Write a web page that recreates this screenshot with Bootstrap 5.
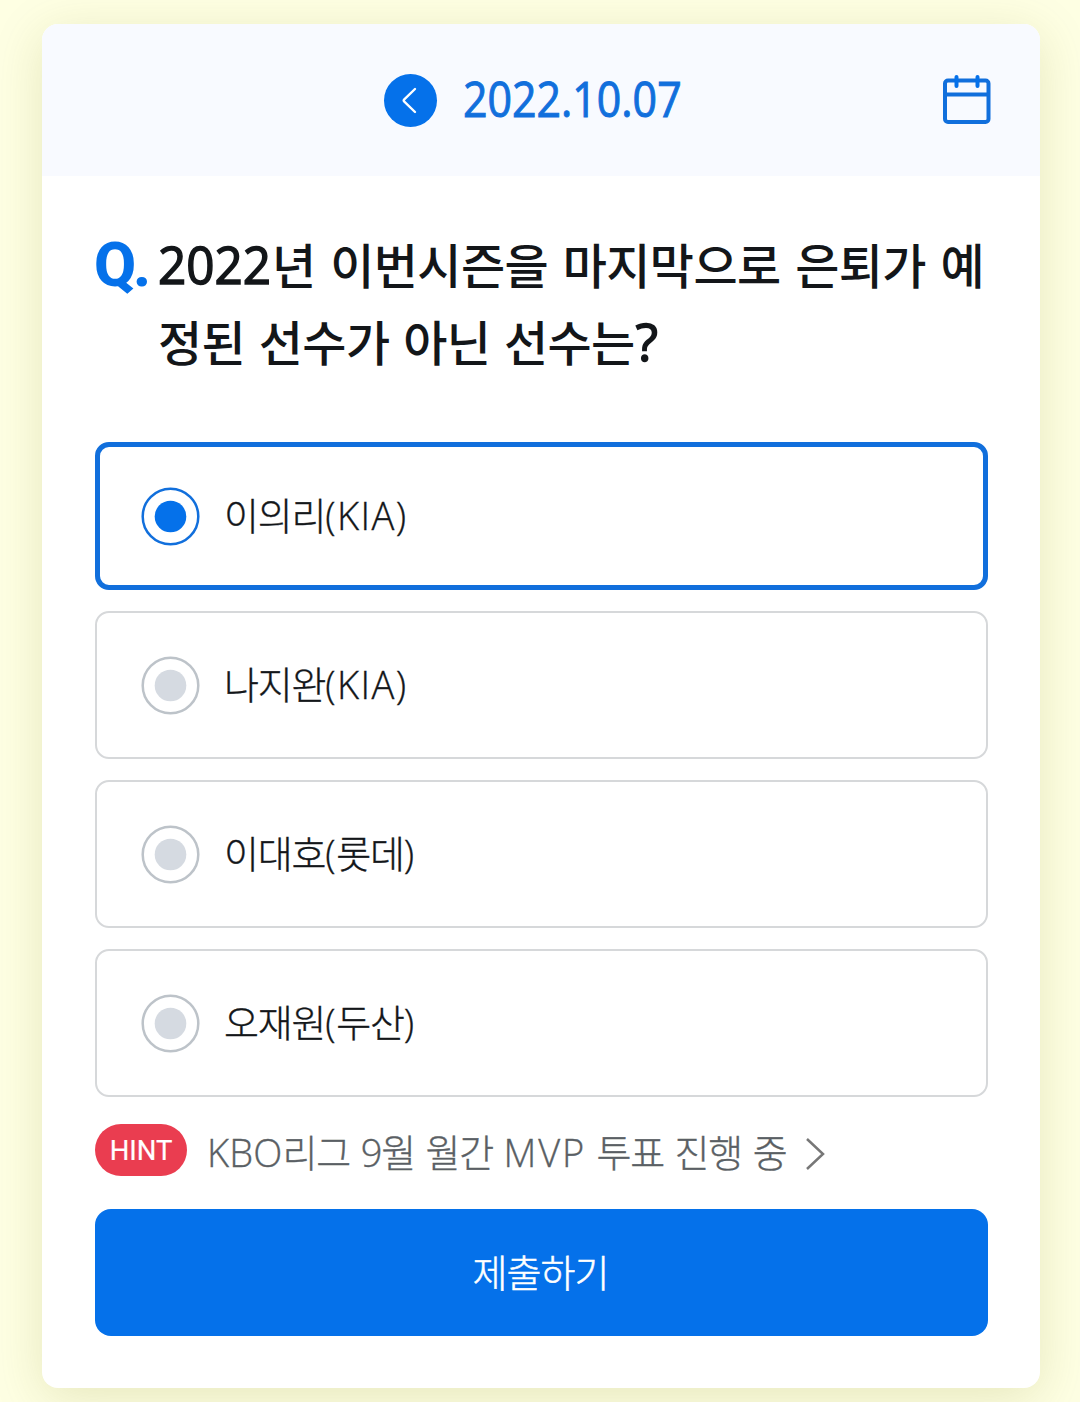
<!DOCTYPE html>
<html lang="ko">
<head>
<meta charset="utf-8">
<meta name="viewport" content="width=device-width, initial-scale=1">
<title>퀴즈</title>
<link href="https://cdn.jsdelivr.net/npm/bootstrap@5.3.0/dist/css/bootstrap.min.css" rel="stylesheet">
<style>
  body { background: #feffe3; font-family: "Open Sans", "Noto Sans CJK KR", sans-serif; color: #131619; height: 1402px; overflow: hidden; padding: 24px 40px 14px 42px; }
  .quiz { height: 1364px; border-radius: 16px; box-shadow: 0 10px 50px rgba(110, 115, 0, .17); overflow: hidden; }
  .quiz-head { height: 152px; background: #f8faff; padding: 0 49px 0 342px; }
  .prev { width: 53px; height: 53px; background: #0571ea; border-radius: 50%; }
  .date { font-size: 49px; line-height: 60px; font-weight: 400; color: #116fdc; margin-left: 26px; padding-bottom: 5px; transform: scaleX(.875); transform-origin: left; -webkit-text-stroke: 1px currentColor; }
  .cal { margin-bottom: 2px; }
  .quiz-body { padding: 51px 52px 52px 53px; }
  .question { height: 215px; }
  .q-mark { width: 63px; font-family: Roboto, sans-serif; font-size: 61px; line-height: 76px; font-weight: 800; letter-spacing: -3px; color: #0571ea; margin-left: -1px; margin-right: 1px; }
  .q-text { font-size: 48px; line-height: 77px; font-weight: 500; letter-spacing: -.6px; word-spacing: 2.8px; margin: 0; white-space: nowrap; }
  .second { word-spacing: 1.8px; }
  .digits { display: inline-block; width: 114px; font-size: 52px; line-height: 1; letter-spacing: 0; transform: scaleX(.95); transform-origin: left; -webkit-text-stroke: 1.5px currentColor; }
  .ask { font-size: 52px; line-height: 1; margin-left: 1px; -webkit-text-stroke: 1.5px currentColor; }
  .option { height: 148px; border: 2px solid #d6d8da; border-radius: 14px; padding-left: 44px; font-size: 38px; font-weight: 300; letter-spacing: -1.2px; }
  .option.picked { border: 5px solid #116fdc; padding-left: 41px; }
  .answer { padding-bottom: 2px; -webkit-text-stroke: .35px currentColor; }
  .latin { letter-spacing: .6px; }
  .kia { letter-spacing: 1.4px; }
  .latin-wide { letter-spacing: 1.8px; }
  .latin-snug { letter-spacing: .2px; }
  .ring { width: 59px; height: 59px; margin-right: 24px; margin-bottom: 0; }
  .hint-row { height: 52px; margin-top: 27px; color: #5a5f64; }
  .hint-pill { width: 92px; height: 52px; border-radius: 26px; background: #ea3d50; color: #fff; font-family: Roboto, sans-serif; font-size: 27.500px; font-weight: 400; padding-top: 2px; -webkit-text-stroke: .2px #fff; }
  .hint-text { font-size: 38px; font-weight: 300; letter-spacing: -1.2px; word-spacing: 1.9px; margin-left: 20px; padding-top: 5px; white-space: nowrap; -webkit-text-stroke: .35px currentColor; }
  .chevron { margin-left: 18px; margin-top: 8px; }
  .submit { height: 127px; margin-top: 33px; border: 0; border-radius: 16px; background: #0571ea; color: #fff; font-size: 38px; font-weight: 300; letter-spacing: -.9px; padding: 0 2px 1px 0; -webkit-text-stroke: .5px #fff; }
</style>
</head>
<body>
<main class="quiz bg-white">
  <header class="quiz-head d-flex align-items-center">
    <div class="prev d-flex align-items-center justify-content-center flex-shrink-0">
      <svg width="53" height="53" viewBox="0 0 53 53" fill="none" stroke="#fff" stroke-width="2.4" stroke-linecap="round" stroke-linejoin="round"><path d="M31 15 20.3 25.3Q19 26.5 20.3 27.7L31 38"/></svg>
    </div>
    <div class="date">2022.10.07</div>
    <svg class="cal ms-auto" width="49" height="52" viewBox="0 0 49 52" fill="none" stroke="#116fdc" stroke-width="4"><rect x="3" y="7.500" width="43.500" height="41.500" rx="3"/><path d="M3 21.500H47"/><path d="M14.500 4V13M35.500 4V13" stroke="#0571ea" stroke-linecap="round"/></svg>
  </header>
  <div class="quiz-body">
    <div class="question d-flex">
      <div class="q-mark flex-shrink-0">Q.</div>
      <h1 class="q-text"><span class="digits">2022</span>년 이번시즌을 마지막으로 은퇴가 예<br><span class="second">정된 선수가 아닌 선수는<span class="ask">?</span></span></h1>
    </div>
    <div class="d-flex flex-column" style="gap:21px">
      <div class="option picked d-flex align-items-center"><svg class="ring" viewBox="0 0 59 59"><circle cx="29.500" cy="29.500" r="27.800" fill="none" stroke="#116fdc" stroke-width="2.500"/><circle cx="29.500" cy="29.500" r="15.800" fill="#0571ea"/></svg><span class="answer">이의리<span class="kia">(KIA)</span></span></div>
      <div class="option d-flex align-items-center"><svg class="ring" viewBox="0 0 59 59"><circle cx="29.500" cy="29.500" r="27.800" fill="none" stroke="#bdc3c9" stroke-width="2.500"/><circle cx="29.500" cy="29.500" r="15.800" fill="#d5dae1"/></svg><span class="answer">나지완<span class="kia">(KIA)</span></span></div>
      <div class="option d-flex align-items-center"><svg class="ring" viewBox="0 0 59 59"><circle cx="29.500" cy="29.500" r="27.800" fill="none" stroke="#bdc3c9" stroke-width="2.500"/><circle cx="29.500" cy="29.500" r="15.800" fill="#d5dae1"/></svg><span class="answer">이대호<span class="latin">(</span>롯데<span class="latin">)</span></span></div>
      <div class="option d-flex align-items-center"><svg class="ring" viewBox="0 0 59 59"><circle cx="29.500" cy="29.500" r="27.800" fill="none" stroke="#bdc3c9" stroke-width="2.500"/><circle cx="29.500" cy="29.500" r="15.800" fill="#d5dae1"/></svg><span class="answer">오재원<span class="latin">(</span>두산<span class="latin">)</span></span></div>
    </div>
    <div class="hint-row d-flex align-items-center">
      <span class="hint-pill d-flex align-items-center justify-content-center">HINT</span>
      <span class="hint-text"><span class="latin-snug">KBO</span>리그 9월 월간 <span class="latin-wide">MVP</span> 투표 진행 중</span>
      <svg class="chevron" width="24" height="36" viewBox="0 0 24 36" fill="none" stroke="#777" stroke-width="2.500"><path d="M3 3 19 18 3 33"/></svg>
    </div>
    <button class="submit btn w-100" type="button">제출하기</button>
  </div>
</main>
<script src="https://cdn.jsdelivr.net/npm/bootstrap@5.3.0/dist/js/bootstrap.bundle.min.js"></script>
</body>
</html>
